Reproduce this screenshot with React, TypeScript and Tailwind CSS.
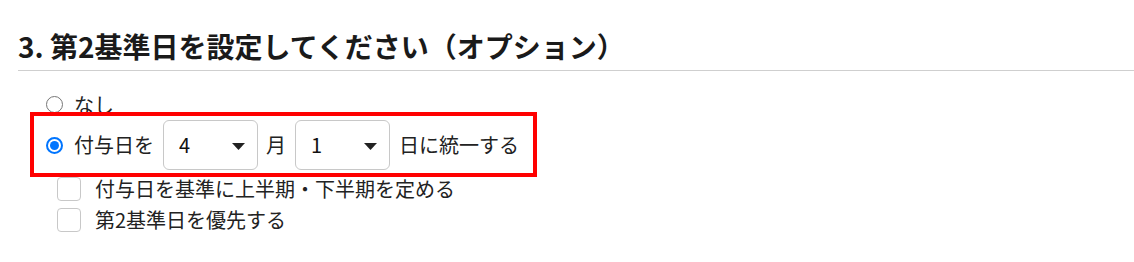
import React from "react";

const font = { fontFamily: '"Noto Sans CJK JP", "Noto Sans", sans-serif' };

function Select({ value }: { value: string }) {
  return (
    <div className="relative w-[95px] h-[50px]">
      <select
        defaultValue={value}
        className="appearance-none w-full h-full border border-[#c8c8c8] rounded-[6px] bg-white pl-[15px] text-[20px] text-[#111] outline-none"
        style={font}
      >
        <option value={value}>{value}</option>
      </select>
      <svg
        className="absolute right-[13px] top-[23px] pointer-events-none"
        width="13"
        height="7"
        viewBox="0 0 13 7"
      >
        <path d="M0 0 H13 L6.5 7 Z" fill="#222" />
      </svg>
    </div>
  );
}

function Radio({ checked }: { checked?: boolean }) {
  return checked ? (
    <span className="w-[17px] h-[17px] rounded-full border-[2px] border-[#0075ff] bg-white flex items-center justify-center shrink-0">
      <span className="w-[9px] h-[9px] rounded-full bg-[#0075ff]" />
    </span>
  ) : (
    <span className="w-[17px] h-[17px] rounded-full border-[1.5px] border-[#767676] bg-white shrink-0" />
  );
}

function Check({ label }: { label: string }) {
  return (
    <div className="flex items-center h-[31px] pl-[39px]">
      <span className="w-[24px] h-[24px] border border-[#c8c8c8] rounded-[4px] bg-white shrink-0" />
      <span className="ml-[14px] text-[20px] leading-[30px] text-[#222]">{label}</span>
    </div>
  );
}

export default function App() {
  return (
    <div className="w-[1134px] h-[262px] bg-white pl-[18px] pt-[25px]" style={font}>
      <h2 className="text-[28px] font-bold leading-[42px] text-[#1a1a1a] pb-[3px] border-b border-[#cfcfcf]">
        3. 第2基準日を設定してください（オプション）
      </h2>
      <div className="mt-[18px]">
        <div className="flex items-center h-[31px] pl-[28px]">
          <Radio />
          <span className="ml-[11px] text-[20px] leading-[30px] text-[#222]">なし</span>
        </div>
        <div className="relative">
          <div className="flex items-center h-[50px] pl-[28px]">
            <Radio checked />
            <span className="ml-[11px] text-[20px] leading-[30px] text-[#222]">付与日を</span>
            <span className="ml-[9px]">
              <Select value="4" />
            </span>
            <span className="ml-[8px] text-[20px] leading-[30px] text-[#222]">月</span>
            <span className="ml-[9px]">
              <Select value="1" />
            </span>
            <span className="ml-[9px] text-[20px] leading-[30px] text-[#222]">日に統一する</span>
          </div>
          <div className="absolute -top-[8px] left-[12px] w-[507px] h-[65px] border-[4px] border-[#ff0000] pointer-events-none" />
        </div>
        <div className="mt-[3px]">
          <Check label="付与日を基準に上半期・下半期を定める" />
          <Check label="第2基準日を優先する" />
        </div>
      </div>
    </div>
  );
}
